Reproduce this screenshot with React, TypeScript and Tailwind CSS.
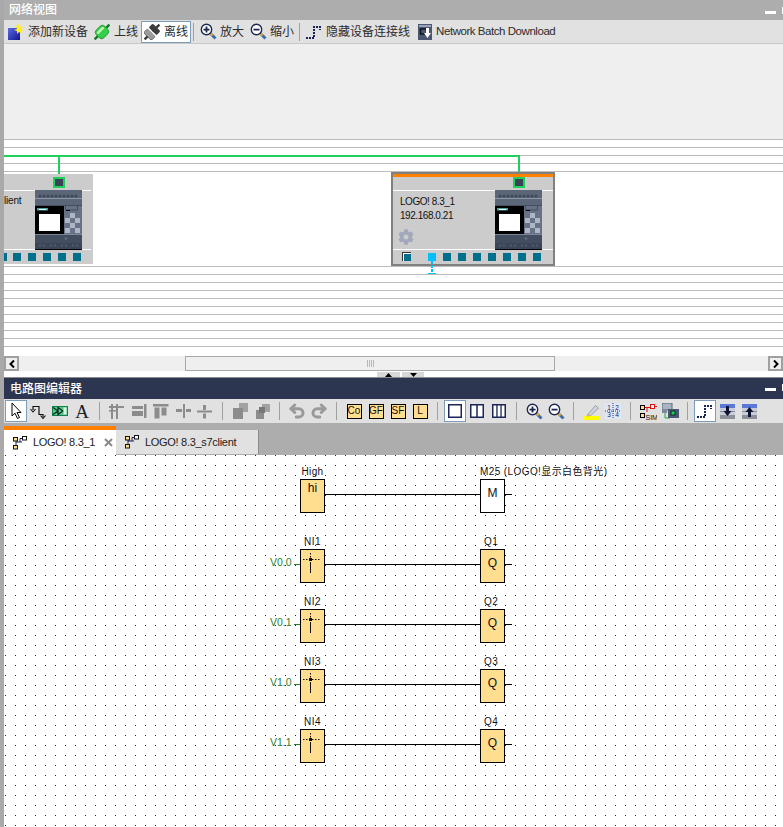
import type { ReactNode } from "react";
import { Undo2, Redo2 } from "lucide-react";
import { FaCog } from "react-icons/fa";

function AddIcon() {
  return (
    <svg width="16" height="16" viewBox="0 0 16 16">
      <defs>
        <linearGradient id="addg" x1="0" y1="0" x2="1" y2="1">
          <stop offset="0" stopColor="#5a6ce8" />
          <stop offset="1" stopColor="#14148c" />
        </linearGradient>
      </defs>
      <rect x="0" y="4" width="12" height="12" fill="url(#addg)" />
      <path d="M11 0l1 3 3-1-2 3 3 1-3 1 1 3-3-2-2 2 0-3-3-1 3-1-1-3z" fill="#ffee22" />
    </svg>
  );
}

function PlugIcon({ body, edge, split }: { body: string; edge: string; split?: boolean }) {
  return (
    <svg width="16" height="16" viewBox="0 0 16 16">
      <g transform="rotate(45 8 8)">
        <rect x="6.8" y="-2.5" width="2.4" height="21" fill={edge} />
        {split ? (
          <>
            <rect x="2.5" y="1.5" width="11" height="5.8" rx="1.5" fill={edge} />
            <rect x="2.5" y="8.7" width="11" height="5.8" rx="1.5" fill={body} stroke={edge} strokeWidth="0.6" />
            <rect x="2" y="7.3" width="12" height="1.4" fill="#ffffff" />
          </>
        ) : (
          <>
            <rect x="2.5" y="2" width="11" height="12" rx="3.5" fill={body} stroke={edge} strokeWidth="0.6" />
            <rect x="4.5" y="3.5" width="2.5" height="9" rx="1" fill="#c6f7b8" />
          </>
        )}
      </g>
    </svg>
  );
}

function ZoomIcon({ plus }: { plus?: boolean }) {
  return (
    <svg width="17" height="17" viewBox="0 0 17 17">
      <path d="M10.5 10.5L15.5 15.5" stroke="#3b6ea8" strokeWidth="3" />
      <path d="M10.5 10.5L12.5 12.5" stroke="#d9a441" strokeWidth="3" />
      <circle cx="6.5" cy="6.5" r="5.2" fill="#ffffff" stroke="#1d2650" strokeWidth="1.4" />
      <rect x="3.5" y="5.7" width="6" height="1.8" fill="#1d2650" />
      {plus && <rect x="5.6" y="3.5" width="1.8" height="6" fill="#1d2650" />}
    </svg>
  );
}

function StairIcon() {
  return (
    <svg width="16" height="16" viewBox="0 0 16 16">
      <path d="M0 14H8V3H14V6" fill="none" stroke="#1a2356" strokeWidth="2" strokeDasharray="2 1" />
    </svg>
  );
}

function BatchIcon() {
  return (
    <svg width="14" height="16" viewBox="0 0 14 16">
      <rect width="14" height="16" fill="#4b5672" />
      <rect x="1" y="1" width="12" height="2" fill="#9aa3b8" />
      <rect x="2.5" y="5" width="6" height="5" fill="none" stroke="#0c0f1c" strokeWidth="1.4" />
      <path d="M8 4h3v5h2l-3.5 5L6 9h2z" fill="#ffffff" />
    </svg>
  );
}

function CursorIcon() {
  return (
    <svg width="16" height="18" viewBox="0 0 16 18">
      <path d="M4 1V14L7 11.2L9.5 16.5L11.5 15.5L9 10.5H13Z" fill="#ffffff" stroke="#000000" strokeWidth="1" />
    </svg>
  );
}

function ConnectIcon() {
  return (
    <svg width="16" height="16" viewBox="0 0 16 16">
      <path d="M3 7V3.5H9V11.5H13V14" fill="none" stroke="#111111" strokeWidth="1.2" />
      <path d="M0.5 6L3 9L5.5 6M10.5 12.5L13 15.5L15.5 12.5" fill="none" stroke="#111111" strokeWidth="1.1" />
    </svg>
  );
}

function BlockIcon() {
  return (
    <svg width="16" height="12" viewBox="0 0 16 12">
      <rect x="0.5" y="1.5" width="15" height="9" fill="#55c98a" stroke="#12804e" />
      <path d="M1 2.5L6 6L1 9.5M6 2.5L11 6L6 9.5Z" fill="none" stroke="#0a2b20" strokeWidth="1.2" />
      <rect x="11.5" y="2.5" width="3" height="7" fill="#d8f4e2" />
    </svg>
  );
}

// greyed-out align and group icons of the editor toolbar
const gray = "#8c8c8c";
function Align({ n }: { n: number }) {
  return (
    <svg width="16" height="16" viewBox="0 0 16 16" fill={gray}>
      {n === 1 && (
        <>
          <rect x="2" y="1" width="2" height="15" />
          <rect x="7" y="1" width="2" height="15" />
          <rect x="0" y="3" width="15" height="2" />
          <rect x="0" y="7" width="8" height="1.5" />
        </>
      )}
      {n === 2 && (
        <>
          <rect x="1" y="3" width="11" height="3" />
          <rect x="1" y="8" width="11" height="5" />
          <rect x="13" y="1" width="2.5" height="14" />
        </>
      )}
      {n === 3 && (
        <>
          <rect x="0" y="1" width="15.5" height="2.5" />
          <rect x="1.5" y="4.5" width="5" height="11" />
          <rect x="8.5" y="4.5" width="5" height="8" />
        </>
      )}
      {n === 4 && (
        <>
          <rect x="1" y="6" width="6" height="3" />
          <rect x="8" y="1" width="2" height="14" />
          <rect x="11" y="6" width="5" height="3" />
        </>
      )}
      {n === 5 && (
        <>
          <rect x="6" y="2" width="3" height="5" />
          <rect x="0" y="7.5" width="15" height="2" />
          <rect x="6" y="10.5" width="3" height="5" />
        </>
      )}
      {n === 6 && (
        <>
          <rect x="7" y="0" width="9" height="9" fill="#a2a2a2" />
          <rect x="1" y="5" width="10" height="11" />
        </>
      )}
      {n === 7 && (
        <>
          <rect x="8" y="1" width="8" height="8" fill="#a2a2a2" />
          <rect x="2" y="7" width="8" height="9" />
          <rect x="5" y="4" width="6" height="6" fill="#777777" />
        </>
      )}
    </svg>
  );
}

function SplitIcon({ parts }: { parts: number }) {
  return (
    <svg width="14" height="14" viewBox="0 0 14 14">
      <rect x="0.75" y="0.75" width="12.5" height="12.5" fill="#ffffff" stroke="#1c2557" strokeWidth="1.5" />
      {parts === 2 && <rect x="6.25" y="1" width="1.5" height="12" fill="#1c2557" />}
      {parts === 3 && (
        <>
          <rect x="4.3" y="1" width="1.3" height="12" fill="#1c2557" />
          <rect x="8.4" y="1" width="1.3" height="12" fill="#1c2557" />
        </>
      )}
    </svg>
  );
}

function PencilIcon() {
  return (
    <svg width="17" height="17" viewBox="0 0 17 17">
      <rect x="0" y="13" width="17" height="4" fill="#ffff00" />
      <path d="M5 11L12.5 2.5L15.5 5L8 12.5L4 13Z" fill="#cdd3dd" stroke="#8a8f99" strokeWidth="0.8" />
      <path d="M4 13L5 11L8 12.5Z" fill="#e2b56c" />
    </svg>
  );
}

function GridIcon() {
  return (
    <svg width="16" height="16" viewBox="0 0 16 16">
      <rect width="16" height="16" fill="#dfe6f6" />
      <path d="M8 0V16M0 8H16" stroke="#30385c" strokeWidth="1" strokeDasharray="1 1" />
      <g fontSize="6.5" fontFamily="Liberation Sans, sans-serif" fill="#1c2557" textAnchor="middle">
        <text x="4" y="6.5">1</text>
        <text x="12" y="6.5">2</text>
        <text x="4" y="14">3</text>
        <text x="12" y="14">4</text>
      </g>
    </svg>
  );
}

function SimIcon() {
  return (
    <svg width="17" height="17" viewBox="0 0 17 17">
      <rect x="0.5" y="2.5" width="4" height="4" fill="#ffdf8f" stroke="#000000" />
      <rect x="0.5" y="10.5" width="4" height="4" fill="#ffdf8f" stroke="#000000" />
      <rect x="10.5" y="1.5" width="4" height="4" fill="#ffffff" stroke="#e01010" />
      <path d="M4.5 4.5H10.5M7 4.5V9" stroke="#e01010" fill="none" />
      <path d="M14.5 3.5H17" stroke="#e01010" />
      <text x="5.5" y="16.5" fontSize="7" fontFamily="Liberation Sans, sans-serif" fill="#111111">SIM</text>
    </svg>
  );
}

function OnlineIcon() {
  return (
    <svg width="17" height="16" viewBox="0 0 17 16">
      <rect x="0" y="0" width="10" height="7" fill="#a9b3c6" stroke="#5b6678" />
      <rect x="0" y="7" width="5" height="3" fill="#7d889c" />
      <path d="M3 10V15H8" stroke="#10b050" fill="none" />
      <rect x="6" y="6" width="11" height="9" fill="#4b5672" />
      <rect x="9" y="8" width="4" height="4" fill="#18d060" stroke="#08301c" />
    </svg>
  );
}

function MoveIcon({ up }: { up?: boolean }) {
  return (
    <svg width="15" height="15" viewBox="0 0 15 15">
      <rect y="0" width="15" height="4" fill="#5a78d8" />
      <rect y="4" width="15" height="7" fill="#c8ccd8" />
      <rect y="11" width="15" height="4" fill="#8c8f98" />
      <rect y="7" width="15" height="1" fill="#8c8f98" />
      {up ? (
        <path d="M7.5 3L11.5 8H9V13H6V8H3.5Z" fill="#0c1230" />
      ) : (
        <path d="M7.5 12L11.5 7H9V2H6V7H3.5Z" fill="#0c1230" />
      )}
    </svg>
  );
}

function TreeIcon() {
  return (
    <svg width="15" height="14" viewBox="0 0 15 14" className="shrink-0">
      <path d="M3 4V10M3 6H9" stroke="#1c2557" fill="none" />
      <rect x="0.5" y="1.5" width="4" height="3.5" fill="#ffdf8f" stroke="#111111" />
      <rect x="0.5" y="9.5" width="4" height="3.5" fill="#ffdf8f" stroke="#111111" />
      <rect x="9.5" y="0.5" width="4" height="3.5" fill="#ffffff" stroke="#111111" />
      <path d="M9 2.5H7V6" stroke="#1c2557" fill="none" />
    </svg>
  );
}

function Plc() {
  return (
    <svg width="47" height="60" viewBox="0 0 47 60" className="block">
      <rect width="47" height="60" fill="#5b6678" />
      {[5, 9, 13, 17, 21, 25, 29, 33, 37, 41].map((x) => (
        <rect key={x} x={x - 1.5} y="4.5" width="3" height="3" rx="1.5" fill="#3f4859" />
      ))}
      <rect y="8" width="47" height="1" fill="#8d95a5" />
      <rect y="15" width="47" height="1" fill="#454e60" />
      <rect y="16" width="29" height="28" fill="#000000" />
      <rect x="2" y="18" width="11" height="2.5" fill="#4aa59f" />
      <rect x="4" y="19" width="7" height="1" fill="#ffffff" />
      <rect x="4" y="24" width="21" height="17" fill="#ffffff" />
      <rect x="29" y="16" width="18" height="28" fill="#677286" />
      <path d="M30.5 16V20H42.5V16" fill="none" stroke="#454e60" />
      <rect x="31" y="20" width="4" height="1" fill="#000000" />
      {[
        [35, 23],
        [30, 28],
        [40, 28],
        [35, 33],
        [30, 38],
        [40, 38],
      ].map(([x, y]) => (
        <rect key={`${x}-${y}`} x={x} y={y} width="5" height="5" fill="#aeb6c5" />
      ))}
      <rect y="44" width="47" height="1" fill="#7d8697" />
      <rect y="45" width="47" height="8" fill="#434d60" />
      <circle cx="31" cy="48.5" r="1.5" fill="#5f697c" />
      <rect y="53" width="47" height="6" fill="#3c4557" />
      {[5, 9, 16, 20, 27, 31, 38, 42].map((x) => (
        <circle key={x} cx={x} cy="55.5" r="1.3" fill="#4f596c" />
      ))}
      <rect y="59" width="47" height="1" fill="#000000" />
    </svg>
  );
}

function EthPort({ className }: { className: string }) {
  return (
    <div className={`absolute w-[12px] h-[11px] border-2 border-[#1ed05c] bg-[#3a4256] ${className}`} />
  );
}

function Port({ className }: { className: string }) {
  return <div className={`absolute top-[79px] h-2 w-2 bg-[#00708c] ${className}`} />;
}

function NetTool({ icon, label, on, narrow, className = "" }: {
  icon: ReactNode;
  label: string;
  on?: boolean;
  narrow?: boolean;
  className?: string;
}) {
  return (
    <div
      className={`flex h-[22px] items-center ${on ? "border border-[#7c9cb8] bg-white px-[2px]" : ""} ${className}`}
    >
      <div className={`shrink-0 ${narrow ? "w-[14px]" : "w-4"}`}>{icon}</div>
      <span
        className={`mt-px whitespace-nowrap leading-none text-[#2c2c2c] ${narrow ? "ml-[4px] text-[11.5px] tracking-[-0.45px]" : "ml-1 text-xs"}`}
      >
        {label}
      </span>
    </div>
  );
}

function Slot({ children, on }: { children: ReactNode; on?: boolean }) {
  return (
    <div
      className={`flex h-[22px] w-[22px] shrink-0 items-center justify-center ${on ? "border border-[#7c9cb8] bg-white" : ""}`}
    >
      {children}
    </div>
  );
}

function Sep() {
  return <div className="mx-[6px] h-[18px] w-px shrink-0 bg-[#a0a0a0]" />;
}

function KeyBox({ label }: { label: string }) {
  return (
    <div className="flex h-[15px] w-[15px] items-center justify-center border border-black bg-[#ffdf8f] text-[10px] leading-none text-[#111]">
      {label}
    </div>
  );
}

function InputMark() {
  return (
    <svg width="23" height="32" viewBox="0 0 23 32" className="absolute left-0 top-0">
      <path d="M2 9.5H19" stroke="#111111" strokeDasharray="1.5 1.5" />
      <path d="M9.5 3V8" stroke="#111111" strokeDasharray="1.5 1.5" />
      <path d="M9.5 12V23" stroke="#111111" />
      <rect x="8" y="8" width="3" height="3" fill="#111111" />
    </svg>
  );
}

function Row({ top, left, right, sig, mid, white, tag }: {
  top: number;
  left: string;
  right?: string;
  sig?: string;
  mid?: string;
  white?: boolean;
  tag?: string;
}) {
  return (
    <div className="absolute inset-x-0 h-[34px]" style={{ top }}>
      <div className="absolute left-[296px] top-[-13px] w-[25px] text-center text-[10px] leading-3 text-[#111] tracking-[0.4px]">{left}</div>
      {sig && (
        <>
          <div className="absolute left-[266px] top-[7px] text-[10.5px] leading-3 text-[#2a802a]">{sig}</div>
          <div className="absolute left-[290px] top-[15px] h-px w-[6px] bg-[#2a802a]" />
        </>
      )}
      <div className="absolute left-[296px] top-0 h-[34px] w-[25px] border border-black bg-[#ffdf8f] text-center text-xs leading-[16px] text-[#111]">
        {mid ?? <InputMark />}
      </div>
      <div className="absolute left-[321px] top-[15px] h-px w-[155px] bg-black" />
      <div className="absolute left-[476px] top-[-13px] whitespace-nowrap text-[10px] leading-3 text-[#111] tracking-[0.4px]">{tag ?? <span className="pl-[4px]">{right}</span>}</div>
      <div className={`absolute left-[476px] top-0 h-[34px] w-[25px] border border-black text-center text-xs leading-[26px] text-[#111] ${white ? "bg-white" : "bg-[#ffdf8f]"}`}>
        {white ? "M" : "Q"}
      </div>
      <div className="absolute left-[501px] top-[15px] h-px w-[7px] bg-black" />
    </div>
  );
}

const topLines = [0, 1, 2, 3, 4];
const lowLines = [0, 1, 2, 3, 4, 5, 6, 7, 8, 9, 10];

export default function App() {
  return (
    <div className="flex h-[827px] w-[783px] overflow-hidden bg-white font-['Liberation_Sans','Noto_Sans_CJK_SC',sans-serif]">
      <div className="w-1 shrink-0 bg-[#a9a9a9]" />
      <div className="relative flex min-w-0 flex-1 flex-col">
        {/* network view */}
        <div className="relative flex h-5 items-center bg-[#adadad] pl-[5px] text-xs font-medium text-white">
          网络视图
          <div className="absolute left-[761px] top-[11px] h-[3px] w-[11px] bg-white" />
          <div className="absolute left-[778px] top-[7px] h-[7px] w-[2px] bg-white" />
        </div>
        <div className="flex h-[24px] items-center border-b border-[#c8c8c8] bg-[#e1e1e1] pl-1">
          <NetTool icon={<AddIcon />} label="添加新设备" />
          <NetTool icon={<PlugIcon body="#35d04a" edge="#0f7a22" />} label="上线" className="ml-[6px]" />
          <NetTool icon={<PlugIcon body="#9a9a9a" edge="#3c3c3c" split />} label="离线" on className="ml-[3px]" />
          <div className="ml-[2px] h-[18px] w-px bg-[#a0a0a0]" />
          <NetTool icon={<ZoomIcon plus />} label="放大" className="ml-[6px]" />
          <NetTool icon={<ZoomIcon />} label="缩小" className="ml-[6px]" />
          <div className="ml-[5px] h-[18px] w-px bg-[#a0a0a0]" />
          <NetTool icon={<StairIcon />} label="隐藏设备连接线" className="ml-[6px]" />
          <NetTool icon={<BatchIcon />} label="Network Batch Download" narrow className="ml-[8px]" />
        </div>
        <div className="relative h-[312px] overflow-hidden">
          <div className="h-[95px] bg-[#efefef]" />
          <div className="flex flex-col gap-[7px]">
            {topLines.map((i) => (
              <div key={i} className="h-px bg-[#bcbcbc]" />
            ))}
          </div>
          <div className="mt-[94px] flex flex-col gap-[7px]">
            {lowLines.map((i) => (
              <div key={i} className="h-px bg-[#bcbcbc]" />
            ))}
          </div>

          {/* bus */}
          <div className="absolute left-0 top-[111px] h-[2px] w-[516px] bg-[#1ed05c]" />
          <div className="absolute left-[54px] top-[111px] h-[22px] w-[2px] bg-[#1ed05c]" />
          <div className="absolute left-[514px] top-[111px] h-[22px] w-[2px] bg-[#1ed05c]" />

          {/* clipped device on the left */}
          <div className="absolute left-0 top-[130px] h-[90px] w-[89px] bg-[#cccccc]">
            <div className="absolute inset-x-0 top-[16px] h-px w-[87px] bg-white" />
            <div className="absolute inset-x-0 top-[75px] h-px w-[87px] bg-white" />
            <EthPort className="left-[49px] top-[3px]" />
            <div className="absolute left-[31px] top-[16px]"><Plc /></div>
            <div className="absolute left-0 top-[21px] text-[10px] leading-3 tracking-[-0.2px] text-[#111]">lient</div>
            <Port className="left-0 !w-[2.5px]" />
            <Port className="left-[9px]" />
            <Port className="left-[24px]" />
            <Port className="left-[39px]" />
            <Port className="left-[54px]" />
            <Port className="left-[69px]" />
          </div>

          {/* selected device */}
          <div className="absolute left-[387px] top-[128px] h-[94px] w-[164px] border-2 border-[#808080] bg-[#cccccc]">
            <div className="h-[3px] bg-[#ff7f00]" />
            <div className="absolute inset-x-0 top-[16px] h-px bg-white" />
            <div className="absolute inset-x-0 top-[75px] h-px bg-white" />
            <EthPort className="left-[120px] top-[3px]" />
            <div className="absolute left-[102px] top-[16px]"><Plc /></div>
            <div className="absolute left-[7px] top-[21px] text-[10px] leading-[14px] tracking-[-0.45px] text-[#111]">
              <div>LOGO! 8.3_1</div>
              <div>192.168.0.21</div>
            </div>
            <div className="absolute left-[5px] top-[55px]">
              <FaCog size={16} color="#a2a9ba" />
            </div>
            <div className="absolute left-[9px] top-[78px] h-[9px] w-[9px] border-l border-t border-[#333] bg-white" />
            <div className="absolute left-[11px] top-[80px] h-[7px] w-[7px] bg-[#00708c]" />
            <div className="absolute left-[35px] top-[79px] h-2 w-2 bg-[#00bfff]" />
            <Port className="left-[50px]" />
            <Port className="left-[65px]" />
            <Port className="left-[80px]" />
            <Port className="left-[95px]" />
            <Port className="left-[110px]" />
            <Port className="left-[125px]" />
            <Port className="left-[140px]" />
          </div>
          {/* dotted link below the active port */}
          <svg width="8" height="13" viewBox="0 0 8 13" className="absolute left-[424px] top-[217px]">
            <path d="M4 0V12" stroke="#00bfff" strokeWidth="2" strokeDasharray="3 1" />
            <rect x="0" y="12" width="8" height="1" fill="#00bfff" />
          </svg>
        </div>

        {/* horizontal scrollbar */}
        <div className="flex h-[15px] items-stretch bg-[#efefef]">
          <div className="flex w-[15px] items-center justify-center border-2 border-[#a0a0a0] text-black">
            <svg width="6" height="8" viewBox="0 0 6 8"><path d="M5 0.5L1.5 4L5 7.5" fill="none" stroke="#000000" strokeWidth="2" /></svg>
          </div>
          <div className="ml-[166px] flex w-[370px] items-center justify-center gap-px border border-[#a8a8a8]">
            <div className="h-[7px] w-px bg-[#b8b8b8]" />
            <div className="h-[7px] w-px bg-[#b8b8b8]" />
            <div className="h-[7px] w-px bg-[#b8b8b8]" />
            <div className="h-[7px] w-px bg-[#b8b8b8]" />
          </div>
          <div className="ml-[213px] flex w-[15px] items-center justify-center border-2 border-[#a0a0a0]">
            <svg width="6" height="8" viewBox="0 0 6 8"><path d="M1 0.5L4.5 4L1 7.5" fill="none" stroke="#000000" strokeWidth="2" /></svg>
          </div>
        </div>
        <div className="relative h-[7px] border-b border-[#8c8c8c] bg-white">
          <div className="absolute left-[373px] top-[1px] flex gap-[2px]">
            <div className="flex h-[5px] w-[23px] items-center justify-center bg-[#d8d8d8]">
              <svg width="7" height="4" viewBox="0 0 7 4"><path d="M3.5 0L7 4H0Z" fill="#000000" /></svg>
            </div>
            <div className="flex h-[5px] w-[22px] items-center justify-center bg-[#d8d8d8]">
              <svg width="7" height="4" viewBox="0 0 7 4"><path d="M3.5 4L7 0H0Z" fill="#000000" /></svg>
            </div>
          </div>
        </div>

        {/* circuit editor */}
        <div className="relative flex h-[21px] items-center bg-[#2d3650] pl-[6px] text-xs font-medium text-white">
          电路图编辑器
          <div className="absolute left-[761px] top-[10px] h-[3px] w-[11px] bg-white" />
          <div className="absolute left-[778px] top-[6px] h-[7px] w-[2px] bg-white" />
        </div>
        <div className="flex h-[24px] items-center bg-[#e1e1e1] pl-px">
          <Slot on><CursorIcon /></Slot>
          <Slot><ConnectIcon /></Slot>
          <Slot><BlockIcon /></Slot>
          <Slot><span className="font-['Liberation_Serif',serif] text-[19px] leading-none text-[#222]">A</span></Slot>
          <Sep />
          <Slot><Align n={1} /></Slot>
          <Slot><Align n={2} /></Slot>
          <Slot><Align n={3} /></Slot>
          <Slot><Align n={4} /></Slot>
          <Slot><Align n={5} /></Slot>
          <Sep />
          <Slot><Align n={6} /></Slot>
          <Slot><Align n={7} /></Slot>
          <Sep />
          <Slot><Undo2 size={18} strokeWidth={4} color="#9a9a9a" /></Slot>
          <Slot><Redo2 size={18} strokeWidth={4} color="#9a9a9a" /></Slot>
          <Sep />
          <Slot><KeyBox label="Co" /></Slot>
          <Slot><KeyBox label="GF" /></Slot>
          <Slot><KeyBox label="SF" /></Slot>
          <Slot><KeyBox label="L" /></Slot>
          <Sep />
          <Slot on><SplitIcon parts={1} /></Slot>
          <Slot><SplitIcon parts={2} /></Slot>
          <Slot><SplitIcon parts={3} /></Slot>
          <Sep />
          <Slot><ZoomIcon plus /></Slot>
          <Slot><ZoomIcon /></Slot>
          <Sep />
          <Slot><PencilIcon /></Slot>
          <Slot><GridIcon /></Slot>
          <Sep />
          <Slot><SimIcon /></Slot>
          <Slot><OnlineIcon /></Slot>
          <Sep />
          <Slot on><StairIcon /></Slot>
          <Slot><MoveIcon /></Slot>
          <Slot><MoveIcon up /></Slot>
        </div>

        {/* tabs */}
        <div className="flex h-8 items-end bg-[#adadad]">
          <div className="flex h-[29px] w-[112px] items-center border-t-4 border-[#ff7f00] bg-white pl-[9px] text-[11px] tracking-[-0.3px] text-[#222]">
            <TreeIcon />
            <span className="ml-[5px] whitespace-nowrap">LOGO! 8.3_1</span>
            <svg width="9" height="9" viewBox="0 0 9 9" className="ml-[9px] shrink-0">
              <path d="M1 1L8 8M8 1L1 8" stroke="#8a8a8a" strokeWidth="2" />
            </svg>
          </div>
          <div className="mb-px flex h-[24px] w-[143px] items-center border-r border-[#8c8c8c] bg-[#e1e1e1] pl-[9px] text-[11px] tracking-[-0.3px] text-[#222]">
            <TreeIcon />
            <span className="ml-[5px] whitespace-nowrap">LOGO! 8.3_s7client</span>
          </div>
        </div>

        {/* diagram */}
        <div className="relative flex-1 overflow-hidden bg-white bg-[radial-gradient(circle_at_1.5px_0.5px,#222222_0.55px,transparent_0.85px)] bg-[length:10px_10px]">
          <Row top={24} left="High" mid="hi" white tag="M25 (LOGO!显示白色背光)" />
          <Row top={94} left="NI1" sig="V0.0" right="Q1" />
          <Row top={154} left="NI2" sig="V0.1" right="Q2" />
          <Row top={214} left="NI3" sig="V1.0" right="Q3" />
          <Row top={274} left="NI4" sig="V1.1" right="Q4" />
        </div>
      </div>
    </div>
  );
}
